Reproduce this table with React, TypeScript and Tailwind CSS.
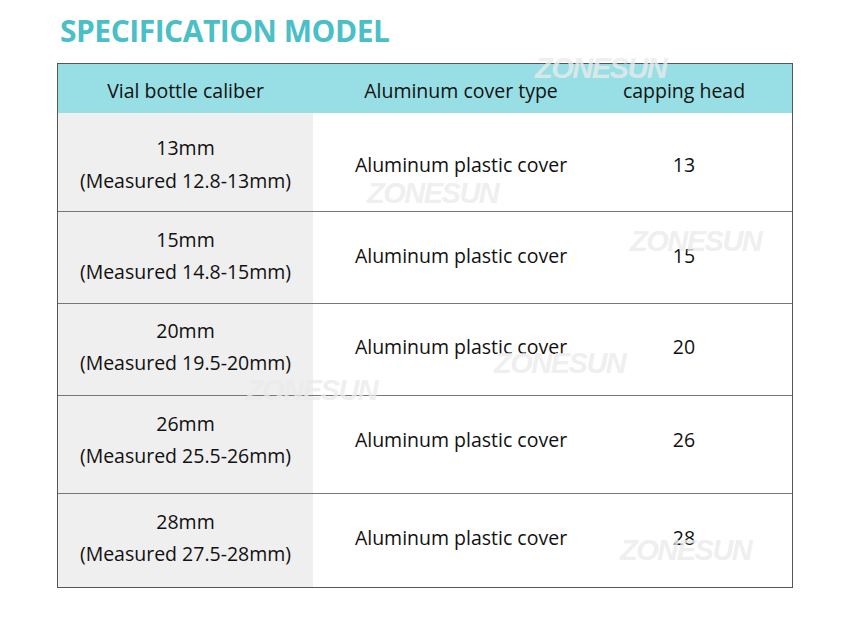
import React from 'react'

const ROWS = [
  { size: '13mm', measured: '(Measured 12.8-13mm)', head: '13', h: 'h-[98px]', pad: 'pt-[5px]' },
  { size: '15mm', measured: '(Measured 14.8-15mm)', head: '15', h: 'h-[92px]', pad: 'pb-[3px]' },
  { size: '20mm', measured: '(Measured 19.5-20mm)', head: '20', h: 'h-[92px]', pad: 'pb-[5px]' },
  { size: '26mm', measured: '(Measured 25.5-26mm)', head: '26', h: 'h-[98px]', pad: 'pb-[9px]' },
  { size: '28mm', measured: '(Measured 27.5-28mm)', head: '28', h: 'h-[94px]', pad: 'pb-[5px]' },
]

const MARKS = [
  'left-[535px] top-[53px]',
  'left-[367px] top-[178px]',
  'left-[630px] top-[226px]',
  'left-[494px] top-[348px]',
  'left-[246px] top-[375px]',
  'left-[620px] top-[535px]',
]

const App = () => {
  return (
    <div className="relative w-[850px] h-[624px] bg-white overflow-hidden font-['Open_Sans',sans-serif] text-[#111]">
      <div className="pt-[12px] pl-[60px] text-[30px] leading-[38px] font-bold tracking-[-0.5px] text-[#4bbfc8]">
        SPECIFICATION MODEL
      </div>

      <div className="ml-[57px] mt-[13px] w-[736px] border border-[#555]">
        <div className="grid grid-cols-[255px_296px_150px_1fr] h-[49px] pt-[5px] bg-[#97dfe5] items-center text-[19.5px]">
          <div className="text-center">Vial bottle caliber</div>
          <div className="text-center">Aluminum cover type</div>
          <div className="text-center">capping head</div>
          <div />
        </div>
        {ROWS.map((row, i) => (
          <div
            key={row.size}
            className={`grid grid-cols-[255px_296px_150px_1fr] ${row.h} text-[19.5px] ${i > 0 ? 'border-t border-[#777]' : ''}`}
          >
            <div className={`bg-[#efefef] ${row.pad} flex flex-col justify-center items-center leading-[32.5px]`}>
              <div>{row.size}</div>
              <div>{row.measured}</div>
            </div>
            <div className={`${row.pad} flex items-center justify-center`}>Aluminum plastic cover</div>
            <div className={`${row.pad} flex items-center justify-center`}>{row.head}</div>
            <div />
          </div>
        ))}
      </div>

      {MARKS.map((pos) => (
        <div
          key={pos}
          className={`absolute ${pos} text-[29px] leading-[30px] italic font-bold tracking-[-1.5px] text-[#ebebeb]/80 font-['Liberation_Sans',sans-serif] pointer-events-none`}
        >
          ZONESUN
        </div>
      ))}
    </div>
  )
}

export default App
